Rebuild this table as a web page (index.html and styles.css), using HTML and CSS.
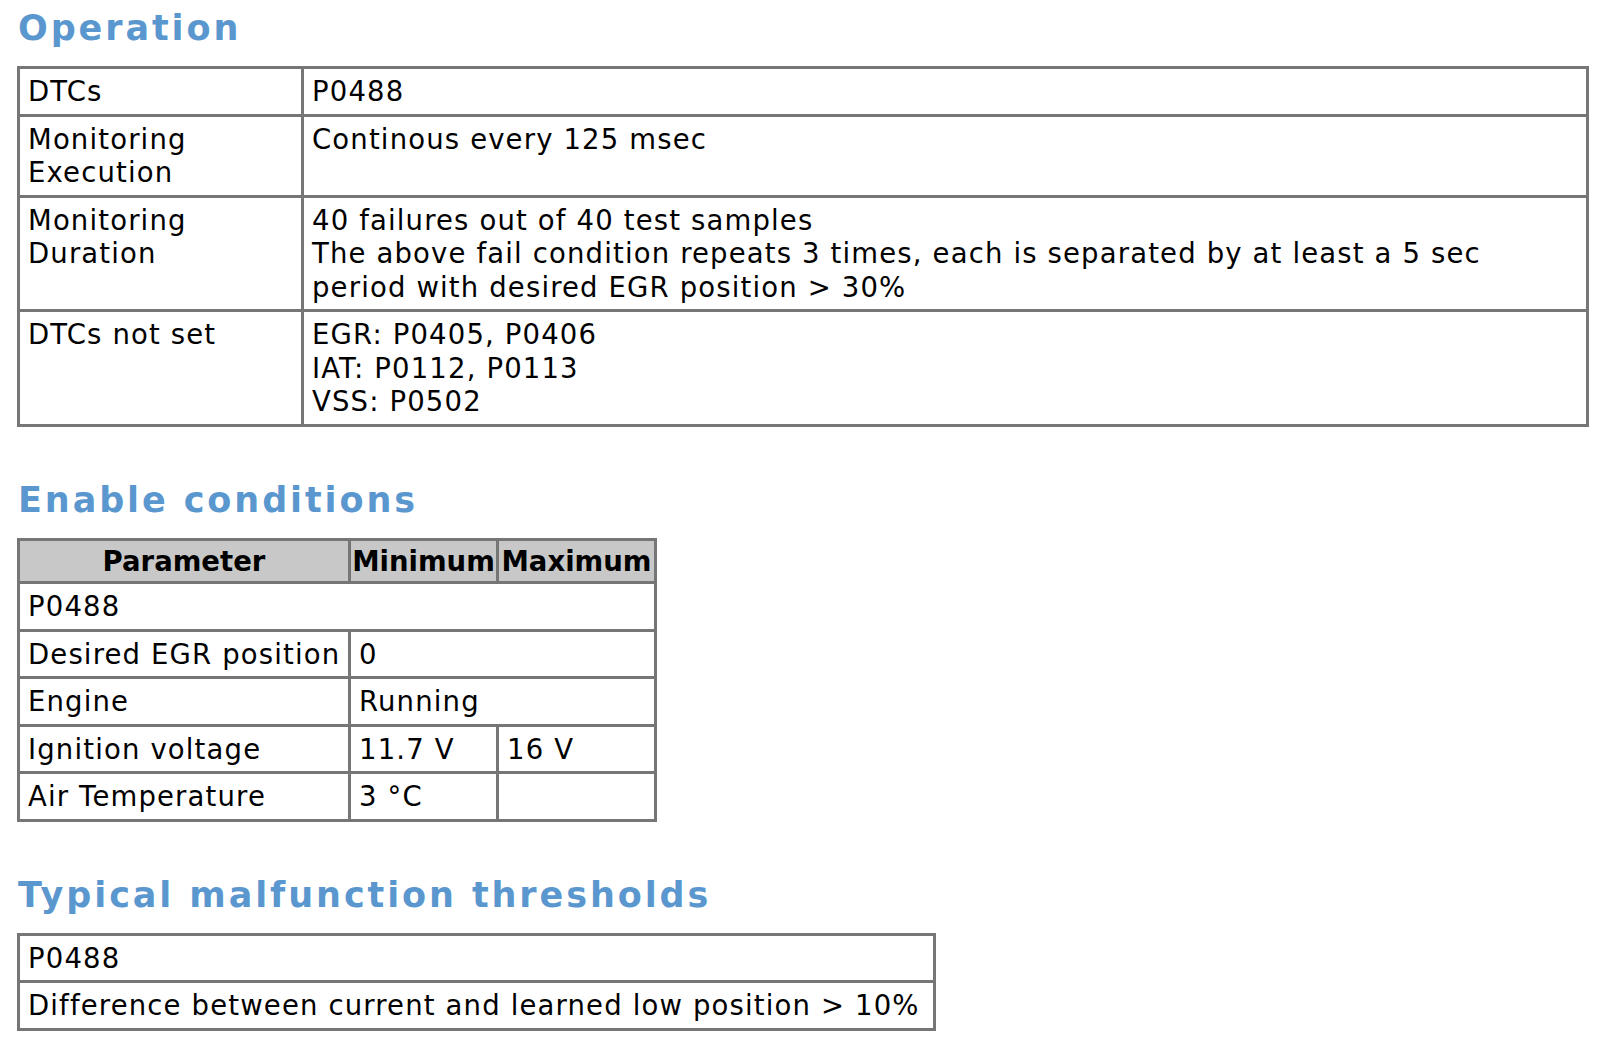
FILE: index.html
```html
<!DOCTYPE html>
<html>
<head>
<meta charset="utf-8">
<title>P0488</title>
<link rel="stylesheet" href="styles.css">
</head>
<body>
<div class="page">
  <h2 class="sec-title first">Operation</h2>
  <table class="grid op">
    <colgroup><col class="op-c1"><col></colgroup>
    <tr><td>DTCs</td><td>P0488</td></tr>
    <tr><td>Monitoring<br>Execution</td><td>Continous every 125 msec</td></tr>
    <tr><td>Monitoring<br>Duration</td><td>40 failures out of 40 test samples<br>The above fail condition repeats 3 times, each is separated by at least a 5 sec<br>period with desired EGR position &gt; 30%</td></tr>
    <tr><td>DTCs not set</td><td>EGR: P0405, P0406<br>IAT: P0112, P0113<br>VSS: P0502</td></tr>
  </table>

  <h2 class="sec-title">Enable conditions</h2>
  <table class="grid en">
    <colgroup><col class="en-c1"><col class="en-c2"><col class="en-c3"></colgroup>
    <tr><th>Parameter</th><th>Minimum</th><th>Maximum</th></tr>
    <tr><td colspan="3">P0488</td></tr>
    <tr><td>Desired EGR position</td><td colspan="2">0</td></tr>
    <tr><td>Engine</td><td colspan="2">Running</td></tr>
    <tr><td>Ignition voltage</td><td>11.7 V</td><td>16 V</td></tr>
    <tr><td>Air Temperature</td><td>3 °C</td><td></td></tr>
  </table>

  <h2 class="sec-title">Typical malfunction thresholds</h2>
  <table class="grid th">
    <tr><td>P0488</td></tr>
    <tr><td>Difference between current and learned low position &gt; 10%</td></tr>
  </table>
</div>
</body>
</html>
```
FILE: styles.css
```css
html, body {
  margin: 0;
  padding: 0;
  background: #ffffff;
}
.page {
  padding: 8px 0 0 17px;
  font-family: "DejaVu Sans", Verdana, sans-serif;
  color: #000;
}
.sec-title {
  margin: 53px 0 18px 1px;
  font-size: 35px;
  line-height: 40px;
  font-weight: bold;
  letter-spacing: 2.9px;
  color: #5b97cf;
}
.sec-title.first {
  margin-top: 0;
}
.grid {
  border-collapse: collapse;
  border: 3px solid #767676;
  table-layout: fixed;
}
.grid td, .grid th {
  border: 3px solid #767676;
  padding: 6px 6px 5px 8px;
  font-size: 27.5px;
  line-height: 33.5px;
  letter-spacing: 1.15px;
  text-align: left;
  vertical-align: top;
  white-space: nowrap;
  font-weight: normal;
}
.grid th {
  background: #c8c8c8;
  font-weight: bold;
  text-align: center;
  letter-spacing: 0;
  padding: 4px 1px 3px;
}
.op { width: 1572px; }
.op-c1 { width: 284px; }
.en { width: 640px; }
.en-c1 { width: 331px; }
.en-c2 { width: 148px; }
.en-c3 { width: 158px; }
.th { width: 919px; }
```
